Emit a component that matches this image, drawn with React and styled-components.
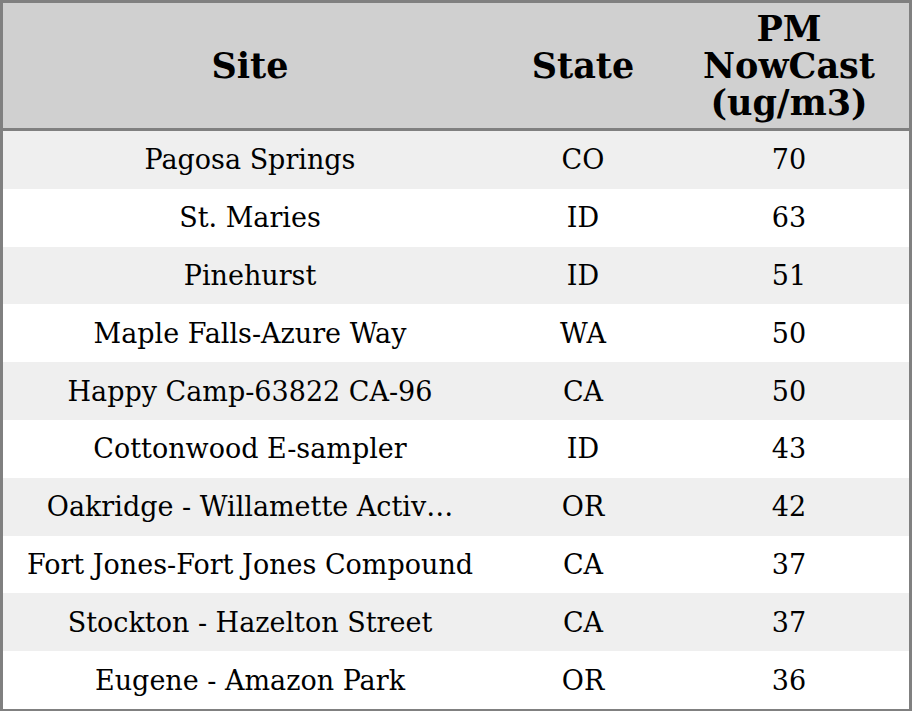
import React from "react";
import styled, { createGlobalStyle } from "styled-components";

const Global = createGlobalStyle`
  html, body { margin: 0; padding: 0; background: #ffffff; }
  body { font-family: "DejaVu Serif", serif; color: #000; }
`;

const Table = styled.div`
  box-sizing: border-box;
  width: 912px;
  border: 3px solid #808080;
  display: grid;
  grid-template-columns: 494px 172px 1fr;
`;

const HeadCell = styled.div`
  background: #d0d0d0;
  border-bottom: 3px solid #808080;
  height: 125px;
  display: flex;
  align-items: center;
  justify-content: center;
  text-align: center;
  font-weight: bold;
  font-size: 35px;
  line-height: 37px;
`;

const Cell = styled.div`
  height: 57.8px;
  display: flex;
  align-items: center;
  justify-content: center;
  text-align: center;
  font-size: 27px;
  white-space: nowrap;
  background: ${(p) => (p.$alt ? "#efefef" : "#ffffff")};
`;

const rows = [
  ["Pagosa Springs", "CO", "70"],
  ["St. Maries", "ID", "63"],
  ["Pinehurst", "ID", "51"],
  ["Maple Falls-Azure Way", "WA", "50"],
  ["Happy Camp-63822 CA-96", "CA", "50"],
  ["Cottonwood E-sampler", "ID", "43"],
  ["Oakridge - Willamette Activ…", "OR", "42"],
  ["Fort Jones-Fort Jones Compound", "CA", "37"],
  ["Stockton - Hazelton Street", "CA", "37"],
  ["Eugene - Amazon Park", "OR", "36"],
];

export default function App() {
  return (
    <>
      <Global />
      <Table>
        <HeadCell>Site</HeadCell>
        <HeadCell>State</HeadCell>
        <HeadCell>
          PM
          <br />
          NowCast
          <br />
          (ug/m3)
        </HeadCell>
        {rows.map((r, i) =>
          r.map((v, j) => (
            <Cell key={`${i}-${j}`} $alt={i % 2 === 0}>
              {v}
            </Cell>
          ))
        )}
      </Table>
    </>
  );
}
